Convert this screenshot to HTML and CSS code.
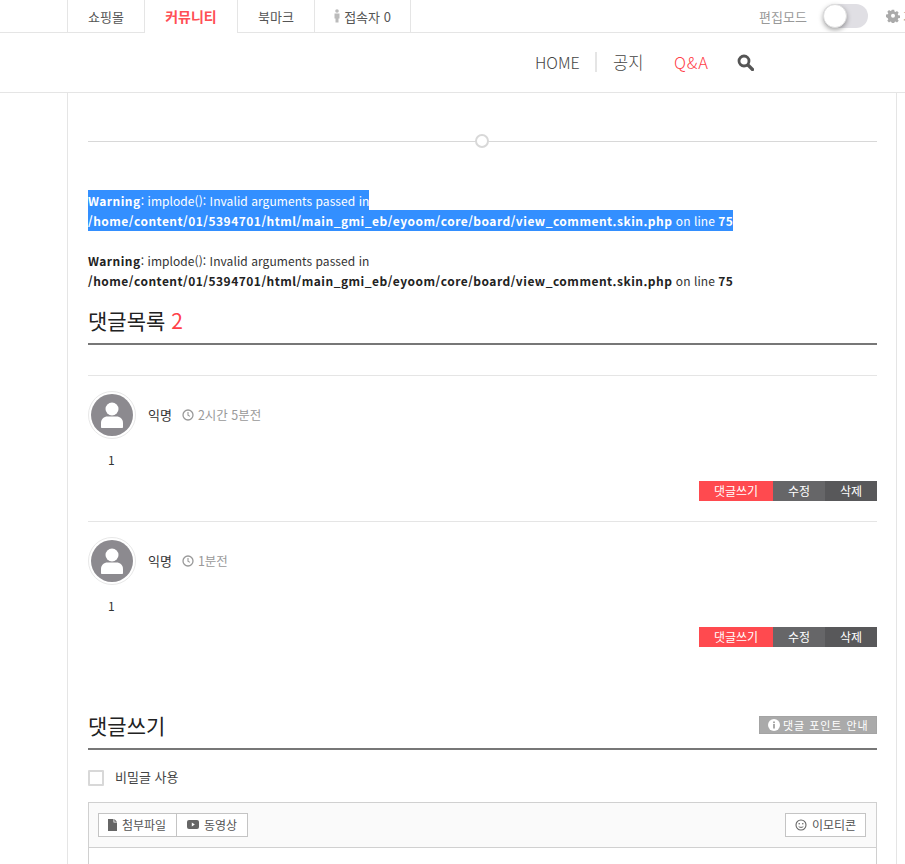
FILE: index.html
```html
<!DOCTYPE html>
<html lang="ko">
<head>
<meta charset="utf-8">
<title>댓글</title>
<link rel="stylesheet" href="styles.css">
</head>
<body>
<div class="topbar">
  <ul class="tabs">
    <li class="tab t1">쇼핑몰</li>
    <li class="tab t2 active">커뮤니티</li>
    <li class="tab t3">북마크</li>
    <li class="tab t4"><svg class="person" width="6" height="14" viewBox="0 0 6 14"><circle cx="3" cy="2" r="1.8" fill="#bbb"/><path d="M.5 4.5h5v5H4.5V13.500h-3V9.500H.5z" fill="#bbb"/></svg>접속자 0</li>
  </ul>
  <div class="tools">
    <span class="edit-label">편집모드</span>
    <span class="toggle"><span class="knob"></span></span>
    <svg class="gear" width="14" height="14" viewBox="0 0 14 14"><path fill="#aaa" fill-rule="evenodd" d="M5.800 1h2.400l.3 1.700 1.100.5 1.400-1 1.700 1.700-1 1.400.5 1.100 1.800.3v2.400l-1.800.3-.5 1.100 1 1.400-1.700 1.700-1.400-1-1.100.5-.3 1.700H5.800l-.3-1.700-1.100-.5-1.400 1-1.700-1.700 1-1.400-.5-1.100L0 8.200V5.800l1.800-.3.5-1.100-1-1.400L3 1.300l1.400 1 1.100-.5zM7 5a2 2 0 1 0 0 4 2 2 0 0 0 0-4z" transform="translate(0 -.2)"/></svg>
    <span class="cut">기</span>
  </div>
</div>
<header class="nav">
  <a class="nav-item home">HOME</a>
  <a class="nav-item notice">공지</a>
  <a class="nav-item qna">Q&amp;A</a>
  <svg class="search" width="17" height="17" viewBox="0 0 17 17"><circle cx="7" cy="7" r="5" fill="none" stroke="#555" stroke-width="2.800"/><path d="M11 11l4.500 4.500" stroke="#555" stroke-width="3.200" stroke-linecap="round"/></svg>
</header>
<main class="content">
  <div class="divider"><span class="dot"></span></div>

  <p class="warn"><span class="sel"><b>Warning</b>: implode(): Invalid arguments passed in <br><b>/home/content/01/5394701/html/main_gmi_eb/eyoom/core/board/view_comment.skin.php</b> on line <b>75</b></span></p>
  <p class="warn"><b>Warning</b>: implode(): Invalid arguments passed in <br><b>/home/content/01/5394701/html/main_gmi_eb/eyoom/core/board/view_comment.skin.php</b> on line <b>75</b></p>

  <h2 class="heading list-heading">댓글목록 <em>2</em></h2>

  <article class="comment first">
    <div class="meta">
      <span class="avatar"><svg width="48" height="48" viewBox="0 0 48 48"><circle cx="24" cy="24" r="21" fill="#8c8a8f"/><circle cx="24" cy="18" r="6.500" fill="#fff"/><path d="M13 36v-4c0-4 3-6.500 6.500-6.500h9c3.500 0 6.500 2.500 6.500 6.500v4c0 .6-.4 1-1 1H14c-.6 0-1-.4-1-1z" fill="#fff"/></svg></span>
      <span class="name">익명</span>
      <svg class="clock" width="12" height="12" viewBox="0 0 12 12"><circle cx="6" cy="6" r="5" fill="none" stroke="#999" stroke-width="1.300"/><path d="M6 3v3.200l2 1.200" fill="none" stroke="#999" stroke-width="1.100"/></svg>
      <span class="time">2시간 5분전</span>
    </div>
    <p class="body">1</p>
    <div class="actions"><a class="btn reply">댓글쓰기</a><a class="btn modify">수정</a><a class="btn del">삭제</a></div>
  </article>

  <article class="comment">
    <div class="meta">
      <span class="avatar"><svg width="48" height="48" viewBox="0 0 48 48"><circle cx="24" cy="24" r="21" fill="#8c8a8f"/><circle cx="24" cy="18" r="6.500" fill="#fff"/><path d="M13 36v-4c0-4 3-6.500 6.500-6.500h9c3.500 0 6.500 2.500 6.500 6.500v4c0 .6-.4 1-1 1H14c-.6 0-1-.4-1-1z" fill="#fff"/></svg></span>
      <span class="name">익명</span>
      <svg class="clock" width="12" height="12" viewBox="0 0 12 12"><circle cx="6" cy="6" r="5" fill="none" stroke="#999" stroke-width="1.300"/><path d="M6 3v3.200l2 1.200" fill="none" stroke="#999" stroke-width="1.100"/></svg>
      <span class="time">1분전</span>
    </div>
    <p class="body">1</p>
    <div class="actions"><a class="btn reply">댓글쓰기</a><a class="btn modify">수정</a><a class="btn del">삭제</a></div>
  </article>

  <div class="heading write-heading">
    <h2 class="write-title">댓글쓰기</h2>
    <a class="point"><svg width="12" height="12" viewBox="0 0 12 12"><circle cx="6" cy="6" r="6" fill="#fff"/><rect x="5" y="5" width="2" height="4.500" fill="#aaa"/><rect x="5" y="2.500" width="2" height="1.600" fill="#aaa"/></svg>댓글 포인트 안내</a>
  </div>

  <label class="secret"><span class="check"></span><span class="secret-text">비밀글 사용</span></label>

  <div class="editor">
    <div class="toolbar">
      <div class="group">
        <a class="tool file"><svg width="9" height="12" viewBox="0 0 9 12"><path d="M0 0h5.500v3.500H9V12H0zM6.300 0L9 2.700H6.300z" fill="#666"/></svg>첨부파일</a>
        <a class="tool video"><svg width="12" height="9" viewBox="0 0 12 9"><rect width="12" height="9" rx="2" fill="#666"/><path d="M4.800 2.500l3 2-3 2z" fill="#fff"/></svg>동영상</a>
      </div>
      <a class="tool emo"><svg width="12" height="12" viewBox="0 0 12 12"><circle cx="6" cy="6" r="5" fill="none" stroke="#666" stroke-width="1.100"/><circle cx="4.200" cy="4.800" r=".8" fill="#666"/><circle cx="7.800" cy="4.800" r=".8" fill="#666"/><path d="M3.700 7.500c1 1.200 3.600 1.200 4.600 0" fill="none" stroke="#666"/></svg>이모티콘</a>
    </div>
  </div>
</main>
</body>
</html>
```
FILE: styles.css
```css
* { box-sizing: border-box; }
html, body { margin: 0; padding: 0; height: 864px; overflow: hidden; background: #fff; }
body { font-family: "Noto Sans CJK KR", "Noto Sans", sans-serif; font-size: 12px; color: #444; }
a { color: inherit; text-decoration: none; }
p, h2, ul { margin: 0; padding: 0; }
em { font-style: normal; }

.topbar { height: 33px; border-bottom: 1px solid #e5e5e5; display: flex; justify-content: space-between; padding-left: 67px; }
.tabs { display: flex; list-style: none; height: 33px; border-right: 1px solid #e5e5e5; }
.tab { height: 32px; border-left: 1px solid #e5e5e5; display: flex; align-items: center; justify-content: center; color: #555; font-size: 13px; }
.t1 { width: 77px; }
.t2 { width: 94px; height: 33px; padding-bottom: 1px; background: #fff; border-right: 1px solid #e5e5e5; color: #ff4f55; font-weight: 700; font-size: 14px; }
.t3 { width: 76px; border-left: 0; }
.t4 { width: 96px; }
.person { margin-right: 4px; }

.tools { display: flex; align-items: center; height: 32px; width: 146px; flex: none; overflow: hidden; }
.edit-label { color: #999; font-size: 13px; width: 64px; flex: none; }
.toggle { position: relative; width: 45px; height: 24px; border-radius: 12px; background: #e0dfe4; flex: none; margin-right: 18px; }
.knob { position: absolute; left: 0; top: 0; width: 24px; height: 24px; border-radius: 50%; background: #fff; box-shadow: 0 2px 5px rgba(0,0,0,.35); border: 1px solid #ddd; }
.gear { flex: none; margin-right: 3px; }
.cut { color: #999; flex: none; }

.nav { height: 60px; border-bottom: 1px solid #e5e5e5; display: flex; align-items: center; padding-left: 535px; padding-bottom: 1px; }
.nav-item { font-size: 16.500px; color: #444; font-weight: 300; flex: none; }
.home { width: 62px; height: 20px; line-height: 20px; border-right: 2px solid #e5e5e5; font-size: 16px; }
.notice { margin-left: 16px; width: 61px; }
.qna { color: #ff4048; width: 63px; letter-spacing: .8px; }
.search { flex: none; margin-top: 1px; }

.content { margin: 0 8px 0 67px; height: 771px; border-left: 1px solid #e5e5e5; border-right: 1px solid #e5e5e5; padding: 48px 19px 0 20px; }
.divider { position: relative; height: 1px; background: #d8d8d8; margin-bottom: 49px; }
.dot { position: absolute; left: 387px; top: -7px; width: 14px; height: 14px; border: 2px solid #d8d8d8; border-radius: 50%; background: #fff; }

.warn { font-size: 12px; line-height: 20px; letter-spacing: .06px; color: #333; margin-bottom: 20px; font-family: "Noto Sans CJK KR", "Liberation Sans", sans-serif; }
.warn b { color: #222; letter-spacing: .48px; }
.sel { background: #338fff; color: #fff; padding: 2px 0; }
.warn .sel b { color: #fff; }

.heading { border-bottom: 2px solid #777; }
.list-heading { font-size: 21px; font-weight: 400; color: #222; line-height: 26px; height: 38px; margin-top: -4px; }
.list-heading em { color: #ff4048; }

.comment { border-top: 1px solid #e5e5e5; padding-top: 15px; height: 146px; }
.comment.first { margin-top: 30px; }
.meta { display: flex; align-items: center; height: 48px; }
.avatar { width: 48px; height: 48px; border-radius: 50%; border: 1px solid #e8e8e8; display: flex; align-items: center; justify-content: center; flex: none; margin-right: 12px; }
.avatar svg { display: block; flex: none; }
.name { color: #333; font-size: 13px; margin: 0 10px 2px 0; }
.clock { margin-right: 4px; flex: none; }
.time { color: #999; font-size: 12.500px; margin-bottom: 2px; }
.body { margin: 11px 0 0 20px; line-height: 20px; color: #333; }
.actions { display: flex; justify-content: flex-end; margin-top: 11px; }
.btn { height: 20px; line-height: 19px; color: #fff; text-align: center; font-size: 12px; }
.reply { width: 74px; background: #ff4a4f; }
.modify { width: 52px; background: #666668; }
.del { width: 52px; background: #58585a; }

.write-heading { display: flex; justify-content: space-between; align-items: flex-start; height: 41px; margin-top: 42px; }
.write-title { font-size: 21px; font-weight: 400; color: #222; line-height: 28px; margin-top: 2px; }
.point { display: flex; align-items: center; gap: 3px; margin-top: 7px; width: 118px; height: 18px; background: #aaa; border: 1px solid #a4a4a4; color: #fff; font-size: 11px; padding-left: 8px; letter-spacing: .95px; }

.secret { display: flex; align-items: center; margin-top: 20px; height: 16px; color: #444; font-size: 13px; }
.check { width: 16px; height: 16px; border: 2px solid #d8d8d8; margin-right: 11px; border-radius: 1px; }
.secret-text { margin-bottom: 4px; }

.editor { margin-top: 16px; border: 1px solid #d0d0d0; border-bottom: 0; height: 80px; }
.toolbar { display: flex; justify-content: space-between; height: 45px; padding: 10px 10px 0 9px; background: #fafafa; border-bottom: 1px solid #d0d0d0; }
.group { display: flex; }
.tool { display: flex; align-items: center; gap: 5px; height: 24px; padding-bottom: 1px; border: 1px solid #c4c4c4; background: #fff; color: #555; font-size: 12px; }
.file { width: 79px; padding-left: 9px; }
.video { width: 71px; padding-left: 10px; border-left: 0; }
.emo { width: 81px; padding-left: 9px; }
```
